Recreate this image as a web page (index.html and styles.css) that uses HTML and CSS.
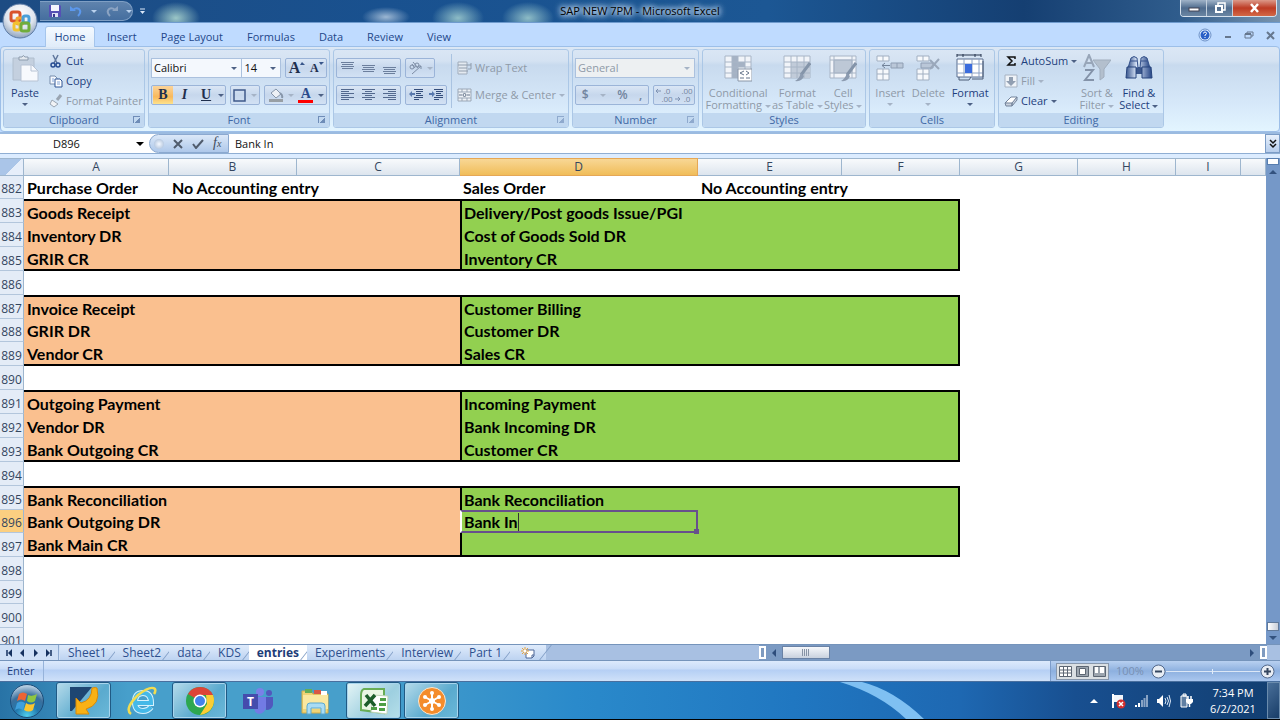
FILE: index.html
```html
<!DOCTYPE html>
<html lang="en">
<head>
    <meta charset="UTF-8">
    <meta name="viewport" content="width=device-width, initial-scale=1.0">
    <link rel="stylesheet" href="styles.css">
    <title>SAP NEW 7PM - Microsoft Excel</title>
</head>
<body>
    <header class="titlebar">
        <button class="office" aria-label="Office Button">
            <svg width="36" height="36" viewBox="0 0 36 36">
                <defs><radialGradient id="orb" cx=".5" cy=".3" r=".7"><stop offset="0" stop-color="#fff"/><stop offset=".6" stop-color="#dfe5ee"/><stop offset="1" stop-color="#8fa3bd"/></radialGradient></defs>
                <circle cx="18" cy="18" r="17" fill="url(#orb)" stroke="#5c7ba6"/>
                <g fill="none" stroke-width="3">
                    <rect x="9" y="9" width="9" height="9" rx="2" stroke="#d9532c"/>
                    <rect x="15" y="15" width="6" height="6" rx="1" stroke="#f0a431"/>
                    <rect x="21" y="13" width="6" height="7" rx="2" stroke="#4a9fd8"/>
                    <rect x="12" y="20" width="6" height="7" rx="2" stroke="#f2c230"/>
                    <rect x="19" y="20" width="8" height="8" rx="2" stroke="#70ad3c"/>
                </g>
            </svg>
        </button>
        <div class="quick-access">
            <button aria-label="Save"><svg width="14" height="14" viewBox="0 0 14 14"><path d="M1 1h11l1 1v11H1z" fill="#5550b4"/><path d="M3 1h8v6H3z" fill="#f4f6fc"/><path d="M4 9h6v4H4z" fill="#dde2f5"/><path d="M5 10h2v3H5z" fill="#37378c"/></svg></button>
            <button aria-label="Undo"><svg width="13" height="12" viewBox="0 0 13 12"><path d="M3 5q3-3 6-1 3 3-1 7" fill="none" stroke="#5c98ec" stroke-width="2"/><path d="M0 1l6 5H0z" fill="#5c98ec"/></svg></button>
            <i class="arrow light"></i>
            <button aria-label="Redo"><svg width="13" height="12" viewBox="0 0 13 12"><path d="M10 5Q7 2 4 4q-3 3 1 7" fill="none" stroke="#8ba3c2" stroke-width="2"/><path d="M13 1L7 6h6z" fill="#8ba3c2"/></svg></button>
            <i class="arrow light"></i>
        </div>
        <button class="customize" aria-label="Customize"><svg width="7" height="7" viewBox="0 0 7 7"><path d="M1 1h5" stroke="#dbe8f8"/><path d="M1 3h5L3.500 6z" fill="#dbe8f8"/></svg></button>
        <h1>SAP NEW 7PM - Microsoft Excel</h1>
        <div class="window-buttons">
            <button aria-label="Minimize"><svg width="12" height="10" viewBox="0 0 12 10"><rect x="1" y="5" width="10" height="3" fill="#fff" stroke="#445"/></svg></button>
            <button aria-label="Restore"><svg width="12" height="12" viewBox="0 0 12 12"><path d="M4 3V1h7v7H9" fill="none" stroke="#fff" stroke-width="1.500"/><rect x="2" y="4" width="6" height="6" fill="none" stroke="#fff" stroke-width="2"/></svg></button>
            <button class="close" aria-label="Close"><svg width="12" height="10" viewBox="0 0 12 10"><path d="M2 1l7 8M9 1L2 9" stroke="#fff" stroke-width="2.500"/></svg></button>
        </div>
    </header>

    <nav class="ribbon-tabs">
        <a href="#" class="active">Home</a>
        <a href="#">Insert</a>
        <a href="#">Page Layout</a>
        <a href="#">Formulas</a>
        <a href="#">Data</a>
        <a href="#">Review</a>
        <a href="#">View</a>
        <div class="book-buttons">
            <button aria-label="Help"><svg width="14" height="14" viewBox="0 0 14 14"><circle cx="7" cy="7" r="6" fill="#dceaff" stroke="#6c91c8"/><circle cx="7" cy="7" r="4.500" fill="#2b5fc7"/><path d="M5.500 5.500q0-1.500 1.500-1.500t1.500 1.500q0 1-1.500 1.500v1M7 9v1" fill="none" stroke="#fff"/></svg></button>
            <button aria-label="Minimize workbook"><svg width="8" height="8" viewBox="0 0 8 8"><path d="M1 6h6" stroke="#66778e" stroke-width="2"/></svg></button>
            <button aria-label="Restore workbook"><svg width="10" height="8" viewBox="0 0 10 8"><path d="M3 2V1h6v4H7" fill="none" stroke="#66778e"/><path d="M1 3h6v4H1z" fill="none" stroke="#66778e"/><path d="M1 3h6" stroke="#66778e" stroke-width="2"/></svg></button>
            <button aria-label="Close workbook"><svg width="9" height="9" viewBox="0 0 9 9"><path d="M1 1l7 7M8 1L1 8" stroke="#66778e" stroke-width="2"/></svg></button>
        </div>
    </nav>

    <div class="ribbon">
        <section class="group clipboard">
            <div class="group-body">
                <button class="big">
                    <svg width="28" height="28" viewBox="0 0 28 28"><path d="M2 4h21v22H2z" fill="#c4d0df" stroke="#b0bece"/><path d="M8 5V3h3q1-3 3 0h3v3H8z" fill="#e4e9ef" stroke="#8c9bad"/><path d="M10 11h11l6 6v10H10z" fill="#f7f9fd" stroke="#b7c3d4"/><path d="M20 11v6h6" fill="none" stroke="#b7c3d4"/></svg>
                    <span>Paste</span><i class="arrow"></i>
                </button>
                <div class="stack">
                    <button><svg width="14" height="14" viewBox="0 0 14 14"><path d="M4 1l4 8M9 1L5 9" stroke="#61789d" stroke-width="1.500"/><circle cx="4" cy="11" r="2" fill="none" stroke="#274d92" stroke-width="1.500"/><circle cx="9" cy="11" r="2" fill="none" stroke="#274d92" stroke-width="1.500"/></svg>Cut</button>
                    <button><svg width="14" height="14" viewBox="0 0 14 14"><path d="M1 2h5l2 2v6H1z" fill="#f5f9ff" stroke="#768cab"/><path d="M6 5h5l2 2v6H6z" fill="#fff" stroke="#2f5595"/><path d="M8 8h3M8 10h3M3 5h2M3 7h2" stroke="#82a3d5"/></svg>Copy</button>
                    <button disabled><svg width="14" height="14" viewBox="0 0 14 14"><path d="M12 1L8 6" stroke="#9aa5b2" stroke-width="3"/><path d="M3 6l6 4-4 3-4-3z" fill="#f1f3f6" stroke="#9aa5b2"/></svg>Format Painter</button>
                </div>
            </div>
            <footer>Clipboard<i class="launcher"></i></footer>
        </section>

        <section class="group font">
            <div class="group-body rows">
                <div class="row">
                    <label class="combo family"><select aria-label="Font"><option>Calibri</option></select><i class="arrow"></i></label>
                    <label class="combo size"><select aria-label="Font size"><option>14</option></select><i class="arrow"></i></label>
                    <div class="box grow">
                        <button class="serif grow-font">A<svg width="5" height="4" viewBox="0 0 5 4"><path d="M0 3l2-3 3 3z" fill="#38568a"/></svg></button>
                        <button class="serif shrink-font">A<svg width="5" height="4" viewBox="0 0 5 4"><path d="M0 0h5L2 3z" fill="#38568a"/></svg></button>
                    </div>
                </div>
                <div class="row">
                    <div class="box biu"><button class="serif pressed"><b>B</b></button><button class="serif"><em>I</em></button><button class="serif"><u>U</u></button><i class="arrow"></i></div>
                    <div class="box borders"><button aria-label="Borders"><svg width="13" height="13" viewBox="0 0 13 13"><path d="M1 1h11v11H1z" fill="none" stroke="#3f5a8a" stroke-width="1.500"/></svg></button><i class="arrow faint"></i></div>
                    <div class="box colors">
                        <button aria-label="Fill Color"><svg width="16" height="16" viewBox="0 0 16 16"><path d="M3 6l5-4 5 5-5 4z" fill="#edf1f6" stroke="#8796aa"/><path d="M12 6q3 2 2 5" fill="none" stroke="#8796aa" stroke-width="2"/><path d="M1 12h14v3H1z" fill="#989fa5"/></svg></button><i class="arrow faint"></i>
                        <button class="serif font-color" aria-label="Font Color">A</button><i class="arrow"></i>
                    </div>
                </div>
            </div>
            <footer>Font<i class="launcher"></i></footer>
        </section>

        <section class="group alignment">
            <div class="group-body">
                <div class="rows">
                    <div class="row">
                        <div class="box triple">
                            <button aria-label="Top Align"><svg width="13" height="14" viewBox="0 0 13 14"><path d="M0 1.500h13M1 3.500h11M0 5.500h13M1 7.500h11" stroke="#6c7f9d"/></svg></button>
                            <button aria-label="Middle Align"><svg width="13" height="14" viewBox="0 0 13 14"><path d="M0 4.500h13M1 6.500h11M0 8.500h13M1 10.500h11" stroke="#6c7f9d"/></svg></button>
                            <button aria-label="Bottom Align"><svg width="13" height="14" viewBox="0 0 13 14"><path d="M0 6.500h13M1 8.500h11M0 10.500h13M1 12.500h11" stroke="#6c7f9d"/></svg></button>
                        </div>
                        <div class="box orient"><button aria-label="Orientation"><svg width="16" height="14" viewBox="0 0 16 14"><circle cx="4" cy="6" r="2" fill="none" stroke="#7d8da5"/><path d="M4 3l3 4M5 1l5 6M4 13l9-8M10 5h3v3" fill="none" stroke="#7d8da5"/><circle cx="9" cy="4" r="2" fill="none" stroke="#7d8da5"/></svg></button><i class="arrow faint"></i></div>
                    </div>
                    <div class="row">
                        <div class="box triple">
                            <button aria-label="Align Left"><svg width="13" height="12" viewBox="0 0 13 12"><path d="M0 .5h13M0 2.500h8M0 4.500h13M0 6.500h8M0 8.500h13M0 10.500h8" stroke="#53698e"/></svg></button>
                            <button aria-label="Center"><svg width="13" height="12" viewBox="0 0 13 12"><path d="M0 .5h13M3 2.500h7M0 4.500h13M3 6.500h7M0 8.500h13M3 10.500h7" stroke="#53698e"/></svg></button>
                            <button aria-label="Align Right"><svg width="13" height="12" viewBox="0 0 13 12"><path d="M0 .5h13M5 2.500h8M0 4.500h13M5 6.500h8M0 8.500h13M5 10.500h8" stroke="#53698e"/></svg></button>
                        </div>
                        <div class="box indent">
                            <button aria-label="Decrease Indent"><svg width="14" height="12" viewBox="0 0 14 12"><path d="M5 .5h9M7 2.500h7M7 4.500h5M7 6.500h7M5 8.500h9M5 10.500h5" stroke="#344e7b"/><path d="M0 5l3-3v2h3v2H3v2z" fill="#5879ae"/></svg></button>
                            <button aria-label="Increase Indent"><svg width="14" height="12" viewBox="0 0 14 12"><path d="M5 .5h9M7 2.500h7M7 4.500h5M7 6.500h7M5 8.500h9M5 10.500h5" stroke="#344e7b"/><path d="M6 5L3 2v2H0v2h3v2z" fill="#5879ae"/></svg></button>
                        </div>
                    </div>
                </div>
                <div class="rows wrap-merge">
                    <button disabled><svg width="15" height="14" viewBox="0 0 15 14"><path d="M1 1h9v12H1z" fill="#e4eaf1" stroke="#a0acbb"/><path d="M1 4h13M2 7h8M2 10h9M14 2v6h-3" fill="none" stroke="#8f9cac"/></svg>Wrap Text</button>
                    <button disabled><svg width="15" height="14" viewBox="0 0 15 14"><path d="M1 1h13v12H1z" fill="#eef2f6" stroke="#9aa7b7"/><path d="M1 4h13M1 10h13M5 1v3M10 1v3M5 10v3M10 10v3" stroke="#9aa7b7"/><path d="M2 7h3M10 7h3" stroke="#66758a"/><circle cx="7.500" cy="7" r="1.500" fill="none" stroke="#66758a"/></svg>Merge &amp; Center<i class="arrow faint"></i></button>
                </div>
            </div>
            <footer>Alignment<i class="launcher faint"></i></footer>
        </section>

        <section class="group number">
            <div class="group-body rows">
                <div class="row"><label class="combo off"><select aria-label="Number format" disabled><option>General</option></select><i class="arrow faint"></i></label></div>
                <div class="row">
                    <div class="box money"><button disabled>$</button><i class="arrow faint"></i><button disabled>%</button><button disabled class="comma">,</button></div>
                    <div class="box decimals">
                        <button disabled aria-label="Increase Decimal"><svg width="6" height="16" viewBox="0 0 6 16"><path d="M1 4h5M3 2L1 4l2 2" fill="none" stroke="#7f93b3"/></svg><span>.0<br>.00</span></button>
                        <button disabled aria-label="Decrease Decimal"><svg width="6" height="16" viewBox="0 0 6 16"><path d="M0 12h5M3 10l2 2-2 2" fill="none" stroke="#7f93b3"/></svg><span>.00<br>.0</span></button>
                    </div>
                </div>
            </div>
            <footer>Number<i class="launcher faint"></i></footer>
        </section>

        <section class="group styles">
            <div class="group-body">
                <button class="big" disabled>
                    <svg width="28" height="28" viewBox="0 0 28 28"><path d="M1 2h26v22H1z" fill="#f1f4f9" stroke="#a8b5c6"/><path d="M8 2h6v22H8zM14 8h7v5h-7z" fill="#a5b2c4"/><path d="M1 8h26M1 13h26M1 19h26M8 2v22M14 2v22M21 2v22" stroke="#a8b5c6"/><path d="M14 15h14v12H14z" fill="#fff" stroke="#8996a8"/><path d="M20 17l-4 2 4 2M16 24h4M22 17l3 2-3 2M22 24h4" fill="none" stroke="#65758b"/></svg>
                    <span>Conditional<br>Formatting <i class="arrow faint"></i></span>
                </button>
                <button class="big" disabled>
                    <svg width="28" height="28" viewBox="0 0 28 28"><path d="M1 2h26v22H1z" fill="#f1f4f9" stroke="#a8b5c6"/><path d="M8 8h19v16H8z" fill="#c1cbd9"/><path d="M1 8h26M1 13h26M1 19h26M8 2v22M14 2v22M21 2v22" stroke="#a8b5c6"/><path d="M27 9l-9 12" stroke="#8494a9" stroke-width="3"/><path d="M18 19l3 3q-2 6-9 5 4-2 6-8z" fill="#8c9bb0"/></svg>
                    <span>Format<br>as Table <i class="arrow faint"></i></span>
                </button>
                <button class="big" disabled>
                    <svg width="28" height="28" viewBox="0 0 28 28"><path d="M1 2h26v22H1z" fill="#f1f4f9" stroke="#a8b5c6"/><path d="M5 6h18v13H5z" fill="#bdc8d6" stroke="#a8b5c6"/><path d="M1 6h26M1 19h26M5 2v22M23 2v22" stroke="#a8b5c6"/><path d="M27 9l-9 12" stroke="#8494a9" stroke-width="3"/><path d="M18 19l3 3q-2 6-9 5 4-2 6-8z" fill="#8c9bb0"/></svg>
                    <span>Cell<br>Styles <i class="arrow faint"></i></span>
                </button>
            </div>
            <footer>Styles</footer>
        </section>

        <section class="group cells">
            <div class="group-body">
                <button class="big" disabled>
                    <svg width="28" height="28" viewBox="0 0 28 28"><path d="M1 2h12v5H1zM1 15h12v11H1zM1 20h12M7 2v5M7 15v11" fill="#f7f9fc" stroke="#a1afc1"/><path d="M15 9h12v5H15zM21 9v5" fill="#bac7d8" stroke="#8f9eb3"/><path d="M6 11.500h8M9 9l-3 2.500L9 14" fill="none" stroke="#74849a"/></svg>
                    <span>Insert</span><i class="arrow faint"></i>
                </button>
                <button class="big" disabled>
                    <svg width="28" height="28" viewBox="0 0 28 28"><path d="M3 2h12v5H3zM3 15h12v11H3zM3 20h12M9 2v5M9 15v11" fill="#f7f9fc" stroke="#a1afc1"/><path d="M7 9h12v5H7z" fill="#bac7d8" stroke="#8f9eb3"/><path d="M16 6l9 9M25 5l-9 10" stroke="#9aa8bb" stroke-width="2"/></svg>
                    <span>Delete</span><i class="arrow faint"></i>
                </button>
                <button class="big">
                    <svg width="28" height="28" viewBox="0 0 28 28"><path d="M1 5h26v18H1z" fill="#fff" stroke="#5b6f90"/><path d="M1 10h26M1 19h26M8 5v18M16 5v18M23 5v18" stroke="#8da2c4"/><path d="M9 10h7v9H9z" fill="#3b6cdd"/><path d="M1 1h24M1 0v3M7 0v3M19 0v3M25 0v3" stroke="#26354f"/><path d="M27 7v18H16M3 23v3h10l2-3" fill="none" stroke="#4d5d76"/></svg>
                    <span>Format</span><i class="arrow"></i>
                </button>
            </div>
            <footer>Cells</footer>
        </section>

        <section class="group editing">
            <div class="group-body">
                <div class="stack">
                    <button><svg width="14" height="14" viewBox="0 0 14 14"><path d="M11 5V3H4l4 4-4 4h7V9" fill="none" stroke="#111" stroke-width="1.500"/></svg>AutoSum <i class="arrow"></i></button>
                    <button disabled><svg width="14" height="14" viewBox="0 0 14 14"><path d="M1 1h12v12H1z" fill="#eff3f8" stroke="#a6b2c2"/><path d="M5 3h4v4h3l-5 5-5-5h3z" fill="#919fb2"/></svg>Fill <i class="arrow faint"></i></button>
                    <button><svg width="14" height="14" viewBox="0 0 14 14"><path d="M1 9l6-6h6L8 10z" fill="#fff" stroke="#73839b"/><path d="M1 9h7v3H2zM8 9l5-6v3l-5 6z" fill="#cad2de" stroke="#73839b"/></svg>Clear <i class="arrow"></i></button>
                </div>
                <button class="big" disabled>
                    <svg width="28" height="28" viewBox="0 0 28 28"><path d="M1 13L6 1l5 12M3 9h6" fill="none" stroke="#98a6b9" stroke-width="2"/><path d="M2 16h8L2 26h9" fill="none" stroke="#8493a9" stroke-width="2"/><path d="M10 6h18l-7 9v8l-4 3V15z" fill="#b3bfcd" stroke="#a0adbd"/></svg>
                    <span>Sort &amp;<br>Filter <i class="arrow faint"></i></span>
                </button>
                <button class="big">
                    <svg width="28" height="28" viewBox="0 0 28 28"><defs><linearGradient id="lens"><stop offset="0" stop-color="#35538b"/><stop offset=".4" stop-color="#dce8fa"/><stop offset="1" stop-color="#234384"/></linearGradient></defs><path d="M11 13h6v7h-6z" fill="#3b578c"/><path d="M6 4q3-3 6 0l1 10H3zM16 4q3-3 6 0l3 10H15z" fill="url(#lens)" stroke="#34518b"/><path d="M2 13h9v11H1zM17 13h9l1 11H17z" fill="url(#lens)" stroke="#27447d"/><path d="M5 7h7M16 7h7" stroke="#34518b"/></svg>
                    <span>Find &amp;<br>Select <i class="arrow"></i></span>
                </button>
            </div>
            <footer>Editing</footer>
        </section>
    </div>

    <div class="formula-bar">
        <div class="name-box"><input type="text" value="D896" aria-label="Name Box"><i class="arrow big-arrow"></i></div>
        <div class="formula-buttons">
            <i class="knob"></i>
            <button aria-label="Cancel"><svg width="10" height="10" viewBox="0 0 10 10"><path d="M1 1l8 8M9 1L1 9" stroke="#505c6d" stroke-width="2"/></svg></button>
            <button aria-label="Enter"><svg width="12" height="10" viewBox="0 0 12 10"><path d="M1 5l3 4 7-8" fill="none" stroke="#505c6d" stroke-width="2"/></svg></button>
            <button class="fx" aria-label="Insert Function"><em>f<small>x</small></em></button>
        </div>
        <input class="formula" type="text" value="Bank In" aria-label="Formula">
        <button class="expand" aria-label="Expand Formula Bar"><svg width="8" height="10" viewBox="0 0 8 10"><path d="M1 1l3 3 3-3M1 5l3 3 3-3" fill="none" stroke="#111" stroke-width="1.500"/></svg></button>
    </div>

    <main class="workbook">
        <div class="sheet">
            <table>
                <colgroup><col class="c-head"><col class="c-a"><col class="c-b"><col class="c-c"><col class="c-d"><col class="c-e"><col class="c-f"><col class="c-g"><col class="c-h"><col class="c-i"><col></colgroup>
                <thead>
                    <tr><th class="corner"></th><th>A</th><th>B</th><th>C</th><th class="current">D</th><th>E</th><th>F</th><th>G</th><th>H</th><th>I</th><th></th></tr>
                </thead>
                <tbody>
                    <tr class="short"><th>882</th><td>Purchase Order</td><td colspan="2">No Accounting entry</td><td>Sales Order</td><td colspan="2">No Accounting entry</td></tr>
                    <tr class="top"><th>883</th><td class="buy" colspan="3">Goods Receipt</td><td class="sell" colspan="3">Delivery/Post goods Issue/PGI</td></tr>
                    <tr><th>884</th><td class="buy" colspan="3">Inventory DR</td><td class="sell" colspan="3">Cost of Goods Sold DR</td></tr>
                    <tr class="bottom"><th>885</th><td class="buy" colspan="3">GRIR CR</td><td class="sell" colspan="3">Inventory CR</td></tr>
                    <tr><th>886</th></tr>
                    <tr class="top"><th>887</th><td class="buy" colspan="3">Invoice Receipt</td><td class="sell" colspan="3">Customer Billing</td></tr>
                    <tr class="short"><th>888</th><td class="buy" colspan="3">GRIR DR</td><td class="sell" colspan="3">Customer DR</td></tr>
                    <tr class="bottom"><th>889</th><td class="buy" colspan="3">Vendor CR</td><td class="sell" colspan="3">Sales CR</td></tr>
                    <tr><th>890</th></tr>
                    <tr class="top"><th>891</th><td class="buy" colspan="3">Outgoing Payment</td><td class="sell" colspan="3">Incoming Payment</td></tr>
                    <tr><th>892</th><td class="buy" colspan="3">Vendor DR</td><td class="sell" colspan="3">Bank Incoming DR</td></tr>
                    <tr class="bottom"><th>893</th><td class="buy" colspan="3">Bank Outgoing CR</td><td class="sell" colspan="3">Customer CR</td></tr>
                    <tr><th>894</th></tr>
                    <tr class="top"><th>895</th><td class="buy" colspan="3">Bank Reconciliation</td><td class="sell" colspan="3">Bank Reconciliation</td></tr>
                    <tr class="short"><th class="current">896</th><td class="buy" colspan="3">Bank Outgoing DR</td><td class="editing-cell">Bank In<span class="caret"></span></td><td class="sell rest" colspan="2"></td></tr>
                    <tr class="bottom"><th>897</th><td class="buy" colspan="3">Bank Main CR</td><td class="sell" colspan="3"></td></tr>
                    <tr><th>898</th></tr>
                    <tr class="short"><th>899</th></tr>
                    <tr><th>900</th></tr>
                    <tr class="short"><th>901</th></tr>
                </tbody>
            </table>
        </div>
        <div class="v-scroll">
            <i class="split"></i>
            <i class="arrow up"></i>
            <i class="thumb"></i>
            <i class="arrow"></i>
        </div>
    </main>

    <div class="sheet-bar">
        <div class="sheet-nav">
            <button aria-label="First sheet"><svg width="7" height="8" viewBox="0 0 7 8"><path d="M1 1v6" stroke="#16325f" stroke-width="1.500"/><path d="M6 0v8L2 4z" fill="#16325f"/></svg></button>
            <button aria-label="Previous sheet"><svg width="7" height="8" viewBox="0 0 7 8"><path d="M5 0v8L1 4z" fill="#16325f"/></svg></button>
            <button aria-label="Next sheet"><svg width="7" height="8" viewBox="0 0 7 8"><path d="M2 0v8l4-4z" fill="#16325f"/></svg></button>
            <button aria-label="Last sheet"><svg width="7" height="8" viewBox="0 0 7 8"><path d="M6 1v6" stroke="#16325f" stroke-width="1.500"/><path d="M1 0v8l4-4z" fill="#16325f"/></svg></button>
        </div>
        <div class="sheet-tabs">
            <button>Sheet1</button>
            <button>Sheet2</button>
            <button>data</button>
            <button>KDS</button>
            <button class="active">entries</button>
            <button>Experiments</button>
            <button>Interview</button>
            <button>Part 1</button>
            <button class="new-sheet" aria-label="Insert Worksheet"><svg width="14" height="12" viewBox="0 0 14 12"><path d="M5 3h8v6l-2 2H5z" fill="#fff" stroke="#4c6698"/><path d="M13 8h-2v3" fill="none" stroke="#4c6698"/><path d="M4 0v8M0 4h8M1 1l6 6M7 1L1 7" stroke="#e8a33d"/><circle cx="4" cy="4" r="1.500" fill="#fff"/></svg></button>
        </div>
        <div class="h-scroll">
            <i class="split"></i>
            <i class="arrow left"></i>
            <i class="thumb"><svg width="8" height="7" viewBox="0 0 8 7"><path d="M.5 0v7M2.500 0v7M4.500 0v7M6.500 0v7" stroke="#8793a5"/></svg></i>
            <i class="arrow right"></i>
            <i class="split"></i>
        </div>
    </div>

    <div class="status-bar">
        <span class="mode">Enter</span>
        <div class="zoom">
            <div class="views">
                <button aria-label="Normal"><svg width="13" height="11" viewBox="0 0 13 11"><path d="M.5.5h12v10H.5zM.5 4h12M.5 7h12M4.500.5v10M8.500.5v10" fill="#fff" stroke="#5c6673"/></svg></button>
                <button aria-label="Page Layout"><svg width="13" height="11" viewBox="0 0 13 11"><path d="M.5.5h12v10H.5z" fill="#9ba4ae" stroke="#5c6673"/><path d="M3.500 2.500h6v6h-6z" fill="#fff" stroke="#5c6673"/></svg></button>
                <button aria-label="Page Break Preview"><svg width="13" height="11" viewBox="0 0 13 11"><path d="M.5.5h12v10H.5z" fill="#9ba4ae" stroke="#5c6673"/><path d="M2 1h3v6H2zM7 1h4v6H7z" fill="#fff"/></svg></button>
            </div>
            <span class="percent">100%</span>
            <button class="round" aria-label="Zoom out"><svg width="15" height="15" viewBox="0 0 15 15"><circle cx="7.500" cy="7.500" r="6.500" fill="#e8edf4" stroke="#53698b"/><path d="M4 7.500h7" stroke="#35465f" stroke-width="2"/></svg></button>
            <span class="track"></span>
            <button class="round" aria-label="Zoom in"><svg width="15" height="15" viewBox="0 0 15 15"><circle cx="7.500" cy="7.500" r="6.500" fill="#e8edf4" stroke="#53698b"/><path d="M4 7.500h7M7.500 4v7" stroke="#35465f" stroke-width="2"/></svg></button>
        </div>
    </div>

    <div class="taskbar">
        <svg class="swoosh" viewBox="0 0 100 37" preserveAspectRatio="none"><path d="M8 0Q48 12 74 37H92Q62 8 30 0z" fill="#7fc0f2"/></svg>
        <button class="start" aria-label="Start">
            <svg width="36" height="36" viewBox="0 0 36 36"><defs><radialGradient id="start" cx=".5" cy=".95" r=".9"><stop offset="0" stop-color="#4fd0ee"/><stop offset=".4" stop-color="#2278ae"/><stop offset=".7" stop-color="#3a6f9c"/><stop offset="1" stop-color="#b4cce0"/></radialGradient></defs><circle cx="18" cy="18" r="16.500" fill="url(#start)" stroke="#1b4d7a"/><path d="M10 11q4-3 8 0l-2 7q-4-3-8 0z" fill="#ee6433"/><path d="M19 12q4 2 9-1l-2 7q-4 3-8 0z" fill="#8fc641"/><path d="M8 20q4-3 8 0l-2 7q-4-3-8 0z" fill="#3fa0dd"/><path d="M17 20q4 3 9 0l-2 7q-4 3-9 0z" fill="#fbc62f"/></svg>
        </button>
        <button class="task open" aria-label="SAP Logon"><svg width="32" height="30" viewBox="0 0 32 30"><path d="M2 1h22L4 25H2z" fill="#1e4672"/><path d="M24 2q4-1 5 0 4 17-11 21l3 5H8V12l5 5q11-3 11-15z" fill="#f9b115" stroke="#d98a08"/></svg></button>
        <button class="task" aria-label="Internet Explorer"><svg width="30" height="30" viewBox="0 0 30 30"><path d="M24 21q-3 4-8 4-8 0-8-9t8-9q8 0 8 10H9" fill="none" stroke="#d8f2fc" stroke-width="6"/><path d="M24 21q-3 4-8 4-8 0-8-9t8-9q8 0 8 10H9" fill="none" stroke="#45b9e8" stroke-width="4"/><path d="M4 28Q-3 23 11 9 24-1 28 3q1 2-1 5" fill="none" stroke="#f1dc52" stroke-width="2.500"/></svg></button>
        <button class="task open" aria-label="Google Chrome"><svg width="28" height="28" viewBox="0 0 28 28"><circle cx="14" cy="14" r="14" fill="#2da74f"/><path d="M14 14L2 7Q6 0 14 0q9 0 13 8H14z" fill="#dd4437"/><path d="M14 28l7-11-1-9h7q2 5 0 11-4 8-13 9z" fill="#fbcd35"/><circle cx="14" cy="14" r="6.500" fill="#fff"/><circle cx="14" cy="14" r="5" fill="#4382ec"/></svg></button>
        <button class="task teams" aria-label="Microsoft Teams"><svg width="32" height="28" viewBox="0 0 32 28"><circle cx="18" cy="5" r="4" fill="#7a80e8"/><circle cx="27" cy="6" r="3" fill="#5158bd"/><path d="M12 10h12v10q-1 6-7 7-5-1-5-7z" fill="#727be4"/><path d="M24 10h7v8q-1 5-7 5z" fill="#5158bd"/><path d="M1 7h15v15H1z" fill="#454cad"/><text x="8.500" y="19" text-anchor="middle" fill="#fff" font-size="12" font-weight="700">T</text></svg></button>
        <button class="task" aria-label="Windows Explorer"><svg width="32" height="28" viewBox="0 0 32 28"><path d="M2 4h9l2 3h15v19H2z" fill="#efd477" stroke="#d1ac49"/><path d="M5 2h7v4H5z" fill="#63ad58"/><path d="M14 3h7v4h-7z" fill="#d95745"/><path d="M21 4h6v4h-6z" fill="#fff"/><path d="M3 8h25v14H3z" fill="#fae8a0"/><path d="M7 27v-8q0-3 3-3h12q3 0 3 3v8h-4v-6H11v6z" fill="#a9dcf4" stroke="#5aa9d2"/></svg></button>
        <button class="task open excel" aria-label="Microsoft Excel"><svg width="30" height="28" viewBox="0 0 30 28"><path d="M5 2h20v24L2 23V8q0-5 3-6z" fill="#e9f6e3" stroke="#68ad55" stroke-width="2"/><path d="M14 8l15 1-1 18-16-2z" fill="#fff" stroke="#bed5b8"/><path d="M21 11h6v3h-6zM20 16h7v3h-7zM20 21h6v3h-6zM12 20h6v3h-6z" fill="#4f9e46"/><path d="M7 8l9 11M16 8L6 19" stroke="#1c5d2a" stroke-width="3.500"/></svg></button>
        <button class="task open" aria-label="GoToMeeting"><svg width="28" height="28" viewBox="0 0 28 28"><circle cx="14" cy="14" r="13.500" fill="#f48c2b" stroke="#fbe7d0"/><path d="M14 6v16M7 10l14 8M21 10L7 18" stroke="#fff" stroke-width="2"/><g fill="#fff"><circle cx="14" cy="6" r="2"/><circle cx="14" cy="22" r="2"/><circle cx="7" cy="10" r="2"/><circle cx="21" cy="18" r="2"/><circle cx="21" cy="10" r="2"/><circle cx="7" cy="18" r="2"/><circle cx="14" cy="14" r="3"/></g></svg></button>
        <div class="tray">
            <i class="arrow up light"></i>
            <svg width="16" height="16" viewBox="0 0 16 16"><path d="M3 1v14" stroke="#fff" stroke-width="2"/><path d="M4 2h9v7H4z" fill="#f2f6fb"/><circle cx="11" cy="11" r="4.500" fill="#d32f2f"/><path d="M9 9l4 4M13 9l-4 4" stroke="#fff" stroke-width="1.500"/></svg>
            <svg width="14" height="14" viewBox="0 0 14 14"><path d="M1 11h2v2H1zM4 9h2v4H4z" fill="#fff"/><path d="M7 6h2v7H7zM9.500 4h2v9h-2zM12 1h2v12h-2z" fill="#88a3c4"/></svg>
            <svg width="15" height="14" viewBox="0 0 15 14"><path d="M1 5h2l4-4v12L3 9H1z" fill="#fff"/><path d="M9 4q2 3 0 6M11 3q3 4 0 8M13 1q3 6 0 12" fill="none" stroke="#dce9f7"/></svg>
            <svg width="15" height="15" viewBox="0 0 15 15"><path d="M2 3h6v11H2zM4 1h3v2H4z" fill="#5f7fa3" stroke="#fff"/><path d="M7 6h7v3l-2 2H9L7 9z" fill="#fff"/><path d="M9 3v3M12 3v3M10.500 11v3" stroke="#fff" stroke-width="1.500"/></svg>
            <time>7:34 PM<br>6/2/2021</time>
            <button class="show-desktop" aria-label="Show desktop"></button>
        </div>
    </div>
</body>
</html>
```
FILE: styles.css
```css
* {
    box-sizing: border-box;
}

body {
    margin: 0;
    height: 100vh;
    display: flex;
    flex-direction: column;
    overflow: hidden;
    font-family: "Open Sans", "Noto Sans", sans-serif;
    font-size: 11px;
    line-height: 12px;
    color: #1e3f7d;
    background-color: #bfdbff;
}

button, input, select {
    font: inherit;
    color: inherit;
    border: none;
    padding: 0;
    margin: 0;
    background: none;
}

button {
    display: flex;
    align-items: center;
    justify-content: center;
    white-space: nowrap;
}

button:disabled, select:disabled {
    color: #8f9aa8;
    opacity: 1;
}

svg {
    flex: none;
}

/* small triangle used by all drop-downs */
.arrow {
    display: inline-block;
    flex: none;
    width: 0;
    border: 3px solid transparent;
    border-top-color: #4d6185;
    border-bottom-width: 0;
}

.arrow.faint {
    border-top-color: #a5b3c6;
}

.arrow.light {
    border-top-color: #b9d1ee;
}

.arrow.up {
    border: 4px solid transparent;
    border-bottom-color: #33527f;
    border-top-width: 0;
}

.arrow.up.light {
    border-bottom-color: #fff;
}

.arrow.left, .arrow.right {
    border: 4px solid transparent;
    border-right: 4px solid #2e4d7c;
    border-left-width: 0;
}

.arrow.right {
    border-right-width: 0;
    border-left: 4px solid #2e4d7c;
}

/* title bar */
.titlebar {
    position: relative;
    flex: none;
    height: 23px;
    display: flex;
    align-items: center;
    padding-left: 40px;
    border-bottom: 1px solid #6f9bce;
    background:
        radial-gradient(ellipse 24px 16px at 176px 18px, #9cc7c7, transparent),
        radial-gradient(ellipse 24px 10px at 386px 17px, #9cb7d3, transparent),
        radial-gradient(ellipse 26px 16px at 458px 18px, #8dbcc6, transparent),
        radial-gradient(ellipse 26px 16px at 528px 18px, #8dbcc6, transparent),
        linear-gradient(90deg, #1d4c83, #19518f 30%, #1c5794 60%, #153f72 80%, #2f5c8c 92%, #7893ae);
}

.office {
    position: absolute;
    left: 2px;
    top: 3px;
    z-index: 2;
}

.quick-access {
    display: flex;
    align-items: center;
    gap: 8px;
    width: 93px;
    height: 20px;
    padding-left: 8px;
    border: 1px solid #7f9fc4;
    border-left: none;
    border-radius: 0 10px 10px 0;
    background: linear-gradient(#5f83ad, #456e9f);
}

.customize {
    margin-left: 6px;
}

.titlebar h1 {
    flex: 1;
    margin: 0;
    padding-right: 46px;
    text-align: center;
    font-size: 11px;
    font-weight: 400;
    color: #000;
    text-shadow: 0 0 4px #c3d9ef, 0 0 6px #c3d9ef, 0 0 6px #c3d9ef, 0 0 8px #c3d9ef;
}

.window-buttons {
    display: flex;
    align-self: flex-start;
    height: 17px;
    margin-right: 3px;
    border: 1px solid #d4e0ec;
    border-top: none;
    border-radius: 0 0 4px 4px;
    overflow: hidden;
}

.window-buttons button {
    width: 26px;
    border-right: 1px solid #c1cedb;
    background: linear-gradient(#a0b3c8, #4e6b8d 50%, #6b86a3);
}

.window-buttons .close {
    width: 43px;
    border-right: none;
    background: linear-gradient(#dc9989, #bd3b24 50%, #d46846);
}

/* ribbon */
.ribbon-tabs {
    flex: none;
    display: flex;
    height: 23px;
    padding-left: 45px;
    padding-top: 3px;
    background-color: #bfdbff;
}

.ribbon-tabs a {
    display: flex;
    align-items: center;
    justify-content: center;
    height: 21px;
    padding: 0 12px;
    color: #23478a;
    text-decoration: none;
    white-space: nowrap;
}

.ribbon-tabs a.active {
    width: 50px;
    padding: 0;
    border: 1px solid #a5c5ec;
    border-bottom: none;
    border-radius: 3px 3px 0 0;
    background: linear-gradient(#f5faff, #e0ecf9);
    z-index: 1;
}

.book-buttons {
    margin-left: auto;
    margin-right: 5px;
    display: flex;
    align-items: center;
    gap: 12px;
    height: 18px;
}

.ribbon {
    flex: none;
    display: flex;
    gap: 3px;
    height: 86px;
    padding: 2px 2px 3px;
    border: 1px solid #9dbfe8;
    border-radius: 4px;
    background: linear-gradient(#dbe7f5, #d4e2f2 14px, #c8daee 18px, #d7e9fa 70%, #e3f5ff);
}

.group {
    display: flex;
    flex-direction: column;
    flex: none;
    border: 1px solid #abc7e6;
    border-radius: 3px;
    overflow: hidden;
}

.group-body {
    flex: 1;
    min-height: 0;
    display: flex;
    padding: 0 2px;
}

.group footer {
    position: relative;
    flex: none;
    height: 14px;
    line-height: 14px;
    text-align: center;
    color: #4068a6;
    background-color: #c1d8f0;
}

.launcher {
    position: absolute;
    right: 4px;
    top: 3px;
    width: 7px;
    height: 7px;
    border-top: 1px solid #6f8db8;
    border-left: 1px solid #6f8db8;
    background: linear-gradient(135deg, transparent 55%, #6f8db8 55%);
}

.launcher.faint {
    opacity: 0.6;
}

.clipboard {
    width: 142px;
}

.font {
    width: 182px;
}

.alignment {
    width: 236px;
}

.number {
    width: 127px;
}

.styles {
    width: 164px;
}

.cells {
    width: 126px;
}

.editing {
    width: 166px;
}

.big {
    flex: 1 1 auto;
    flex-direction: column;
    justify-content: flex-start;
    padding-top: 4px;
}

.big span {
    padding-top: 5px;
}

.big .arrow {
    margin-top: 4px;
}

.big span .arrow {
    vertical-align: middle;
    margin-top: 0;
}

.stack {
    display: flex;
    flex-direction: column;
    padding-top: 1px;
}

.stack button {
    justify-content: flex-start;
    gap: 3px;
    height: 20px;
}

.clipboard .big {
    flex: none;
    width: 38px;
}

.clipboard .stack {
    padding-left: 5px;
}

.editing .stack {
    padding-left: 3px;
    width: 76px;
}

.rows {
    display: flex;
    flex-direction: column;
    justify-content: flex-start;
    gap: 7px;
    padding-top: 8px;
}

.rows.group-body {
    padding-top: 8px;
}

.row {
    display: flex;
    gap: 4px;
    height: 20px;
}

.box {
    display: flex;
    align-items: center;
    justify-content: space-around;
    border: 1px solid #9bb4d8;
    border-radius: 2px;
    background: linear-gradient(#dae6f5, #c6d7ec 50%, #d2e1f4);
}

.combo {
    display: flex;
    align-items: center;
    padding-right: 4px;
    border: 1px solid #abc1de;
    color: #111;
    background-color: #f4f8fd;
}

.combo select {
    flex: 1;
    min-width: 0;
    height: 18px;
    padding-left: 2px;
    appearance: none;
}

.family {
    width: 92px;
}

.size {
    width: 40px;
    margin-left: -5px;
}

.off {
    width: 120px;
    background-color: #edf0f2;
}

.grow {
    width: 42px;
}

.serif {
    font-family: "Liberation Serif", serif;
    font-size: 14px;
    font-weight: 700;
    color: #1f2f4d;
}

.grow-font, .shrink-font {
    align-items: flex-start;
    line-height: 18px;
}

.grow-font {
    font-size: 16px;
}

.grow-font svg, .shrink-font svg {
    margin-top: 3px;
}

.shrink-font {
    font-size: 12px;
}

.biu {
    width: 75px;
}

.biu button {
    width: 20px;
    height: 18px;
}

.pressed {
    background: linear-gradient(#fbd49a, #f8b95c 60%, #fde28d);
}

.borders {
    width: 31px;
}

.colors {
    width: 63px;
}

.font-color {
    width: 15px;
    height: 16px;
    line-height: 12px;
    color: #2b4b8c;
    border-bottom: 3px solid #f00;
}

.triple {
    width: 65px;
}

.orient {
    width: 30px;
}

.indent {
    width: 42px;
}

.wrap-merge {
    margin: 4px 0 5px 4px;
    padding: 4px 0 0 5px;
    border-left: 1px solid #a9c3e1;
    align-items: flex-start;
}

.wrap-merge button {
    height: 20px;
    gap: 3px;
}

.money {
    width: 74px;
}

.money button {
    font-size: 12px;
    font-weight: 600;
    color: #72849e;
}

.decimals {
    width: 42px;
}

.decimals button {
    font-size: 8px;
    line-height: 8px;
    color: #72849e;
}

/* formula bar */
.formula-bar {
    flex: none;
    display: flex;
    height: 26px;
    padding: 2px 0 5px;
    background: linear-gradient(#9bbbe0 2px, #fff 2px, #fff 21px, #8faed3 21px, #8faed3 22px, #dcecff 22px);
    color: #111;
}

.name-box {
    display: flex;
    align-items: center;
    width: 149px;
}

.name-box input {
    width: 133px;
    text-align: center;
}

.big-arrow {
    border-width: 4px 4px 0;
    border-top-color: #000;
    margin-left: 3px;
}

.formula-buttons {
    display: flex;
    align-items: center;
    gap: 9px;
    width: 80px;
    height: 19px;
    padding-left: 4px;
    border: 1px solid #8ba9d0;
    border-radius: 10px 0 0 10px;
    background: linear-gradient(#dbe8f8, #aec8ea);
}

.knob {
    width: 10px;
    height: 10px;
    border-radius: 50%;
    background: radial-gradient(#f5f9ff, #9fb6d4);
}

.fx {
    font-family: "Liberation Serif", serif;
    font-size: 14px;
    color: #404b5c;
}

.fx small {
    font-size: 10px;
}

.formula {
    flex: 1;
    min-width: 0;
    height: 19px;
    padding-left: 6px;
}

.expand {
    width: 15px;
    height: 19px;
    border: 1px solid #7b9cc6;
    background: linear-gradient(#e8f1fc, #b6cdec);
}

/* worksheet */
.workbook {
    flex: 1;
    min-height: 0;
    display: flex;
    background-color: #fff;
}

.sheet {
    flex: 1;
    min-width: 0;
    overflow: hidden;
}

table {
    width: 100%;
    table-layout: fixed;
    border-spacing: 0;
}

.c-head { width: 24px; }
.c-a { width: 145px; }
.c-b { width: 128px; }
.c-c { width: 163px; }
.c-d { width: 238px; }
.c-e { width: 144px; }
.c-f { width: 118px; }
.c-g { width: 118px; }
.c-h { width: 98px; }
.c-i { width: 65px; }

th {
    padding: 0;
    font-size: 12px;
    font-weight: 400;
    color: #34465f;
}

thead th {
    height: 18px;
    line-height: 16px;
    border-right: 1px solid #9eb6ce;
    border-bottom: 1px solid #9eb6ce;
    border-top: 1px solid #9eb6ce;
    background: linear-gradient(#f8fafc, #dde5ee);
}

thead .current {
    border-color: #e5a756;
    background: linear-gradient(#f8d795, #f0bd59);
}

.corner {
    background: linear-gradient(135deg, #aac5e8 55%, #e6eefa 55%);
}

tbody tr {
    height: 24px;
}

tbody tr.short {
    height: 23px;
}

tbody th {
    line-height: 18px;
    border-right: 1px solid #9eb6ce;
    border-bottom: 1px solid #b3c6dc;
    background-color: #e4ecf7;
    vertical-align: bottom;
}

tbody .current {
    background-color: #fbcf81;
}

td {
    padding: 1px 3px 0;
    font-family: Lato, sans-serif;
    font-size: 16px;
    line-height: 18px;
    font-weight: 700;
    font-variant-ligatures: none;
    color: #000;
    white-space: nowrap;
}

.buy {
    background-color: #fac08f;
}

.sell {
    padding-left: 2px;
    border-left: 2px solid #000;
    border-right: 2px solid #000;
    background-color: #92d050;
}

.rest {
    border-left: none;
}

.top td {
    border-top: 2px solid #000;
}

.bottom td {
    padding-top: 2px;
    border-bottom: 2px solid #000;
}

.editing-cell {
    position: relative;
    padding-left: 2px;
    border: 2px solid #67508c;
    border-left-color: #fff;
    background-color: #92d050;
}

.editing-cell::after {
    content: "";
    position: absolute;
    right: -3px;
    bottom: -3px;
    width: 5px;
    height: 5px;
    background-color: #67508c;
}

.caret {
    display: inline-block;
    width: 1px;
    height: 18px;
    vertical-align: bottom;
    background-color: #333;
}

.v-scroll {
    width: 14px;
    display: flex;
    flex-direction: column;
    align-items: center;
    gap: 5px;
    padding-bottom: 4px;
    background-color: #7598c8;
}

.v-scroll .split {
    width: 12px;
    height: 7px;
    border: 1px solid #587eaf;
    background-color: #fff;
}

.v-scroll .thumb {
    width: 12px;
    height: 9px;
    margin-top: auto;
    border: 1px solid #60799a;
    background: linear-gradient(90deg, #fff, #c8ced9);
}

.v-scroll .arrow:last-child {
    border-width: 4px 4px 0;
    border-top-color: #33527f;
}

/* sheet tabs and horizontal scroll bar */
.sheet-bar {
    flex: none;
    display: flex;
    height: 17px;
    border-top: 1px solid #7594bb;
    border-bottom: 1px solid #7594bb;
    background-color: #a8c0e2;
}

.sheet-nav {
    width: 59px;
    display: flex;
    align-items: center;
    justify-content: space-around;
    padding: 0 3px;
    border-right: 1px solid #8fabd1;
    background-color: #cfe0f6;
}

.sheet-tabs {
    display: flex;
    padding-left: 1px;
    font-size: 12px;
    color: #2d4f8e;
    background-color: #cfe0f6;
}

.sheet-tabs button {
    position: relative;
    height: 15px;
    padding: 0 8px;
    background: linear-gradient(#dfebfb, #bdd3f1);
}

.sheet-tabs button::after {
    content: "";
    position: absolute;
    right: 0;
    top: 0;
    width: 1px;
    height: 15px;
    background-color: #7f9cc4;
    transform: skewX(-38deg);
}

.sheet-tabs .active {
    font-weight: 700;
    background: #fff;
    color: #1d3d78;
}

.sheet-tabs .new-sheet {
    padding: 0 11px;
}

.h-scroll {
    flex: 0 1 508px;
    margin-left: auto;
    margin-right: 13px;
    display: flex;
    align-items: center;
    gap: 6px;
    background-color: #7b9ac3;
}

.h-scroll .split {
    width: 7px;
    height: 13px;
    border: 2px solid #fff;
    background-color: #7f9bc0;
}

.h-scroll .thumb {
    display: flex;
    align-items: center;
    justify-content: center;
    width: 48px;
    height: 13px;
    border: 1px solid #6a82a5;
    background: linear-gradient(#f6f8fb, #c9d1de);
}

.h-scroll .right {
    margin-left: auto;
}

/* status bar */
.status-bar {
    flex: none;
    display: flex;
    justify-content: space-between;
    height: 21px;
    border-bottom: 1px solid #496f9e;
    background: linear-gradient(#dceafc, #c8dcf8 8px, #b5cff4 9px, #cfe1f9);
}

.mode {
    display: flex;
    align-items: center;
    width: 44px;
    padding-left: 7px;
    border-right: 1px solid #96b3da;
}

.zoom {
    display: flex;
    align-items: center;
    width: 230px;
    padding-left: 5px;
    padding-right: 5px;
    border-left: 1px solid #7c9cca;
    background: linear-gradient(#b8d0f0, #8db0df 50%, #aac7ef);
}

.views {
    display: flex;
    border: 1px solid #8797ac;
    background-color: #dadfe3;
}

.views button {
    width: 17px;
    height: 15px;
}

.percent {
    margin-left: 7px;
    margin-right: 7px;
    color: #7890b3;
}

.track {
    flex: 1;
    height: 5px;
    background:
        linear-gradient(#e2ecf9, #e2ecf9) center / 1px 5px no-repeat,
        linear-gradient(#dbe7f6, #dbe7f6) center / 100% 1px no-repeat;
}

/* windows taskbar */
.taskbar {
    position: relative;
    flex: none;
    display: flex;
    align-items: stretch;
    gap: 3px;
    height: 38px;
    border-bottom: 1px solid #000;
    background: linear-gradient(90deg, #2873a6, #479fcb 10%, #479fcb 28%, #2a8acb 45%, #2077c1 62%, #1e68b2 75%, #184f90 84%, #123e70);
}

.swoosh {
    position: absolute;
    left: 65%;
    top: 0;
    width: 100px;
    height: 37px;
}

.start {
    width: 53px;
}

.task {
    width: 55px;
    border: 1px solid transparent;
    border-radius: 3px;
}

.task.open {
    border-color: #205a84;
    box-shadow: inset 0 0 0 1px #a8d5ed;
    background: linear-gradient(135deg, #b6dbea, #5aaace 60%, #6bb9d9);
}

.task.excel {
    background: linear-gradient(135deg, #e5f5f6, #9dcfe0 60%, #b5dfe9);
}

.tray {
    margin-left: auto;
    display: flex;
    align-items: center;
    gap: 8px;
    color: #fff;
}

.tray .up {
    margin-right: 4px;
}

.tray time {
    width: 62px;
    text-align: center;
    line-height: 16px;
}

.show-desktop {
    align-self: stretch;
    width: 13px;
    margin-left: -5px;
    border: 1px solid #6b8cad;
    background: linear-gradient(135deg, #496f99, #183d68);
}
```
